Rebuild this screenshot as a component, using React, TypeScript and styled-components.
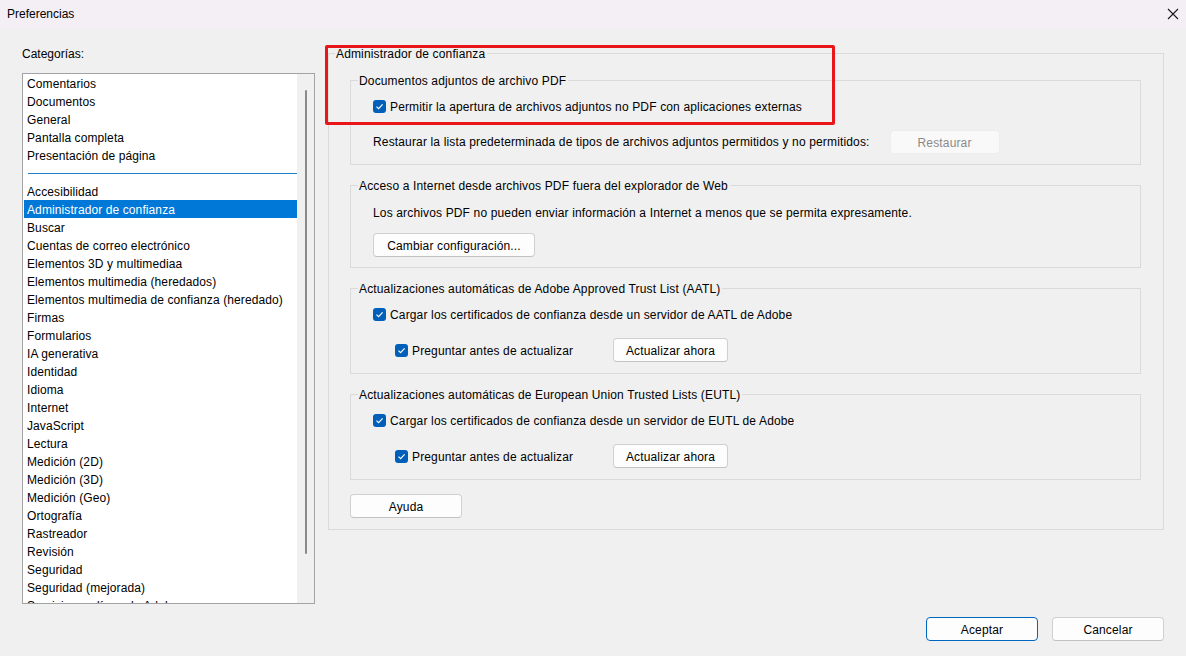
import styled, { createGlobalStyle } from 'styled-components';

const GlobalStyle = createGlobalStyle`
  html, body {
    margin: 0;
    padding: 0;
    background: #f0f0f0;
  }
  * {
    box-sizing: border-box;
  }
`;

const FONT = `"Liberation Sans", Arial, sans-serif`;

const categoriesTop = [
  'Comentarios',
  'Documentos',
  'General',
  'Pantalla completa',
  'Presentación de página',
];

const categories = [
  'Accesibilidad',
  'Administrador de confianza',
  'Buscar',
  'Cuentas de correo electrónico',
  'Elementos 3D y multimediaa',
  'Elementos multimedia (heredados)',
  'Elementos multimedia de confianza (heredado)',
  'Firmas',
  'Formularios',
  'IA generativa',
  'Identidad',
  'Idioma',
  'Internet',
  'JavaScript',
  'Lectura',
  'Medición (2D)',
  'Medición (3D)',
  'Medición (Geo)',
  'Ortografía',
  'Rastreador',
  'Revisión',
  'Seguridad',
  'Seguridad (mejorada)',
  'Servicios en línea de Adobe',
];

const SELECTED = 'Administrador de confianza';

function CheckMark() {
  return (
    <svg width="9" height="9" viewBox="0 0 9 9">
      <path d="M1.5 4.6 L3.6 6.6 L7.6 2.4" fill="none" stroke="#fff" strokeWidth="1.2" />
    </svg>
  );
}

function Check({ label }: { label: string }) {
  return (
    <StCheckRow>
      <StCheckBox>
        <CheckMark />
      </StCheckBox>
      <span>{label}</span>
    </StCheckRow>
  );
}

function App() {
  return (
    <StWindow>
      <GlobalStyle />
      <StTitleBar>
        <StTitle>Preferencias</StTitle>
        <StClose>
          <svg width="12" height="12" viewBox="0 0 12 12">
            <path d="M1 1 L11 11 M11 1 L1 11" stroke="#1a1a1a" strokeWidth="1.1" />
          </svg>
        </StClose>
      </StTitleBar>

      <StMain>
        <StLeft>
          <StLabel>Categorías:</StLabel>
          <StListBox>
            <StList>
              {categoriesTop.map((c) => (
                <StItem key={c}>{c}</StItem>
              ))}
              <StSeparator />
              {categories.map((c) => (
                <StItem key={c} $selected={c === SELECTED}>
                  {c}
                </StItem>
              ))}
            </StList>
            <StScrollTrack>
              <StScrollThumb />
            </StScrollTrack>
          </StListBox>
        </StLeft>

        <StOuterGroup>
          <StOuterLegend>Administrador de confianza</StOuterLegend>

          <StGroup>
            <StLegend>Documentos adjuntos de archivo PDF</StLegend>
            <Check label="Permitir la apertura de archivos adjuntos no PDF con aplicaciones externas" />
            <StButtonRow $spacing={20}>
              <span>
                Restaurar la lista predeterminada de tipos de archivos adjuntos permitidos y no permitidos:
              </span>
              <StButton $width={110} disabled>
                Restaurar
              </StButton>
            </StButtonRow>
          </StGroup>

          <StGroup>
            <StLegend>Acceso a Internet desde archivos PDF fuera del explorador de Web</StLegend>
            <StText>
              Los archivos PDF no pueden enviar información a Internet a menos que se permita expresamente.
            </StText>
            <StButtonRow $gap={13}>
              <StButton $width={162}>Cambiar configuración...</StButton>
            </StButtonRow>
          </StGroup>

          <StGroup $tall>
            <StLegend>Actualizaciones automáticas de Adobe Approved Trust List (AATL)</StLegend>
            <Check label="Cargar los certificados de confianza desde un servidor de AATL de Adobe" />
            <StButtonRow>
              <StSubCheck>
                <Check label="Preguntar antes de actualizar" />
              </StSubCheck>
              <StButton $width={115}>Actualizar ahora</StButton>
            </StButtonRow>
          </StGroup>

          <StGroup $tall>
            <StLegend>Actualizaciones automáticas de European Union Trusted Lists (EUTL)</StLegend>
            <Check label="Cargar los certificados de confianza desde un servidor de EUTL de Adobe" />
            <StButtonRow>
              <StSubCheck>
                <Check label="Preguntar antes de actualizar" />
              </StSubCheck>
              <StButton $width={115}>Actualizar ahora</StButton>
            </StButtonRow>
          </StGroup>

          <StHelpRow>
            <StButton $width={112}>Ayuda</StButton>
          </StHelpRow>
        </StOuterGroup>
      </StMain>

      <StFooter>
        <StButton $width={112} $primary>
          Aceptar
        </StButton>
        <StButton $width={112}>Cancelar</StButton>
      </StFooter>

      <StHighlight />
    </StWindow>
  );
}

export default App;

const StWindow = styled.div`
  position: relative;
  display: flex;
  flex-direction: column;
  width: 1186px;
  height: 656px;
  overflow: hidden;
  background: #f0f0f0;
  color: #000;
  font-family: ${FONT};
  font-size: 12px;
  line-height: 16px;
  letter-spacing: 0.15px;
`;

const StTitleBar = styled.div`
  display: flex;
  align-items: center;
  justify-content: space-between;
  height: 30px;
  padding: 0 7px 2px 7px;
  background: #f4eef5;
`;

const StTitle = styled.span`
  font-size: 12px;
  letter-spacing: 0;
`;

const StClose = styled.div`
  display: flex;
  align-items: center;
`;

const StMain = styled.div`
  display: flex;
  align-items: flex-start;
  flex: 1;
  gap: 13px;
  padding: 15px 22px 0 22px;
`;

const StLeft = styled.div`
  display: flex;
  flex-direction: column;
  width: 293px;
`;

const StLabel = styled.div`
  height: 16px;
  margin-bottom: 12px;
  padding-top: 1px;
  letter-spacing: 0;
`;

const StListBox = styled.div`
  display: flex;
  height: 531px;
  border: 1px solid #a3a3a3;
  background: #fff;
  overflow: hidden;
`;

const StList = styled.div`
  flex: 1;
  padding-left: 1px;
  overflow: hidden;
`;

const StItem = styled.div<{ $selected?: boolean }>`
  height: 18px;
  padding: 2px 0 0 3px;
  line-height: 16px;
  white-space: nowrap;
  letter-spacing: 0.1px;
  background: ${(p) => (p.$selected ? '#0078d7' : 'transparent')};
  color: ${(p) => (p.$selected ? '#fff' : '#000')};
`;

const StSeparator = styled.div`
  height: 18px;
  margin-left: 4px;
  padding-top: 9px;
  &::after {
    content: '';
    display: block;
    height: 1px;
    background: #1f7fc4;
  }
`;

const StScrollTrack = styled.div`
  display: flex;
  justify-content: center;
  width: 17px;
  padding-top: 16px;
  background: #f0f0f0;
`;

const StScrollThumb = styled.div`
  width: 2px;
  height: 464px;
  margin-left: 1px;
  border-radius: 1px;
  background: #8a8a8a;
`;

const StOuterGroup = styled.fieldset`
  display: flex;
  flex-direction: column;
  gap: 12px;
  width: 836px;
  margin: 0;
  padding: 11px 22px 11px 21px;
  border: 1px solid #dadada;
  min-width: 0;
`;

const StOuterLegend = styled.legend`
  margin-left: -15px;
  padding: 0 2px 0 1px;
  line-height: 16px;
  position: relative;
  top: 1px;
`;

const StGroup = styled.fieldset<{ $tall?: boolean }>`
  display: flex;
  flex-direction: column;
  gap: 16px;
  margin: 0;
  padding: 10px 10px ${(p) => (p.$tall ? 11 : 10)}px 22px;
  border: 1px solid #dadada;
  min-width: 0;
`;

const StLegend = styled.legend`
  margin-left: -15px;
  padding: 0 2px 0 1px;
  line-height: 16px;
  position: relative;
  top: 1px;
`;

const StText = styled.div`
  height: 16px;
  margin-top: 1px;
  padding-top: 1px;
  white-space: nowrap;
`;

const StCheckRow = styled.label`
  display: flex;
  align-items: center;
  gap: 4px;
  height: 16px;
  white-space: nowrap;

  span:last-child {
    position: relative;
    top: 1px;
  }
`;

const StCheckBox = styled.span`
  display: flex;
  align-items: center;
  justify-content: center;
  width: 13px;
  height: 13px;
  border-radius: 3px;
  background: #005fb8;
`;

const StButtonRow = styled.div<{ $gap?: number; $spacing?: number }>`
  display: flex;
  align-items: center;
  gap: ${(p) => p.$spacing ?? 17}px;
  height: 24px;
  margin-top: ${(p) => (p.$gap !== undefined ? p.$gap - 16 : 0)}px;
  white-space: nowrap;
`;

const StSubCheck = styled.div`
  width: 201px;
  margin-left: 22px;
`;

const StButton = styled.button<{ $width: number; $primary?: boolean }>`
  flex-shrink: 0;
  width: ${(p) => p.$width}px;
  height: 24px;
  padding: 1px 0 0 0;
  font-family: ${FONT};
  font-size: 12px;
  letter-spacing: 0.15px;
  color: #000;
  background: #fdfdfd;
  border: 1px solid ${(p) => (p.$primary ? '#0067c0' : '#d0d0d0')};
  border-bottom-color: ${(p) => (p.$primary ? '#0067c0' : '#c2c2c2')};
  border-radius: 4px;

  &:disabled {
    color: #8a8a8a;
    background: #f9f9f9;
    border-color: #ededed;
  }
`;

const StHelpRow = styled.div`
  display: flex;
  margin-top: 2px;
`;

const StFooter = styled.div`
  display: flex;
  justify-content: flex-end;
  gap: 14px;
  padding: 13px 22px 15px 0;
`;

const StHighlight = styled.div`
  position: absolute;
  left: 325px;
  top: 45px;
  width: 510px;
  height: 80px;
  border: 3px solid #e8151b;
  border-radius: 2px;
  pointer-events: none;
`;
